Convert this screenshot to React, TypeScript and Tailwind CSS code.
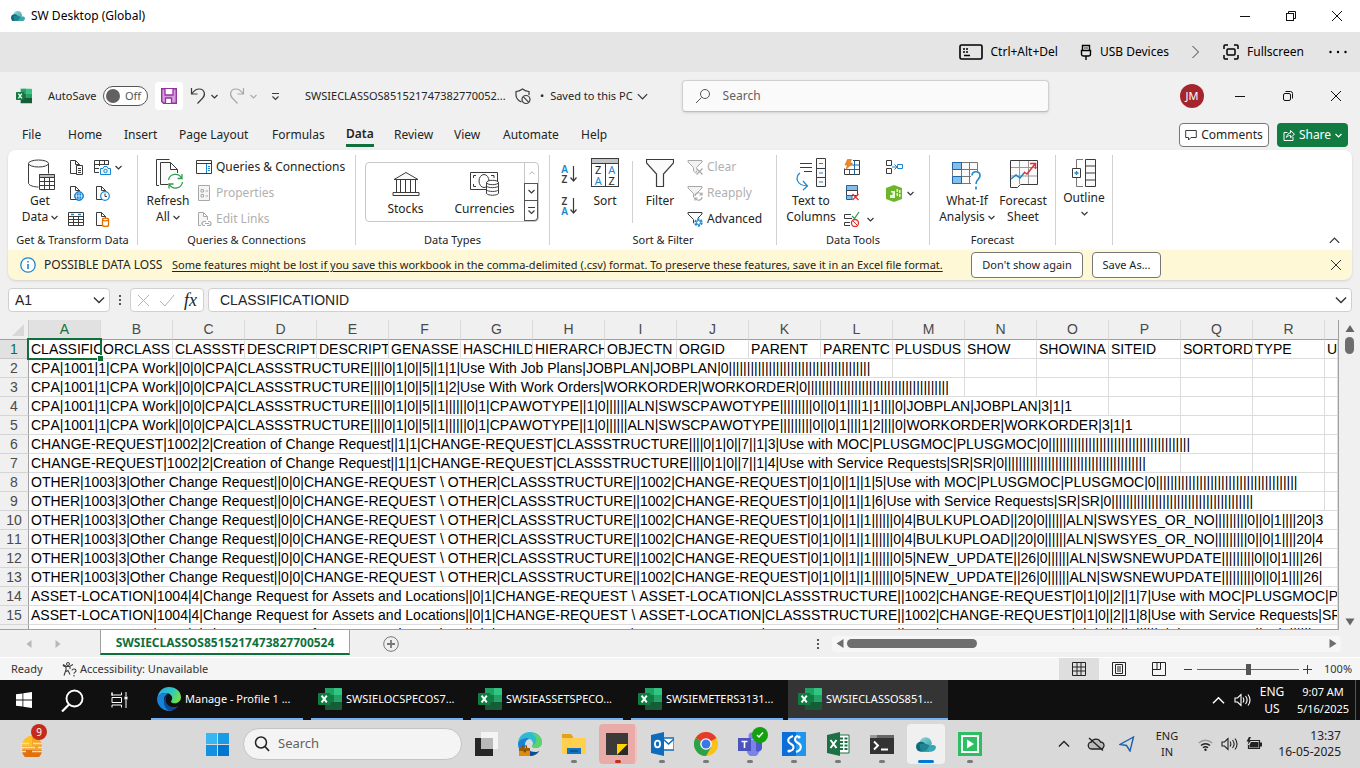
import type { ReactNode } from "react";

type P = { children?: ReactNode };

function Svg({ w, h, children, stroke = "#3b3b3b", label }: { w: number; h: number; children: ReactNode; stroke?: string; label?: string }) {
  return (
    <svg width={w} height={h} viewBox={`0 0 ${w} ${h}`} fill="none" stroke={stroke} className="shrink-0" aria-hidden={!label} aria-label={label}>
      {children}
    </svg>
  );
}

const Chevron = ({ c = "#333", up = false, w = 7 }: { c?: string; up?: boolean; w?: number }) => (
  <svg width={w} height={w} viewBox="0 0 8 8" fill="none" stroke={c} strokeWidth={w > 8 ? 0.9 : 1.3} className="shrink-0" aria-hidden>
    <path d={up ? "M.6 5.700 4 2.300l3.400 3.400" : "M.6 2.300 4 5.700l3.400-3.400"} />
  </svg>
);

const Minimize = () => <Svg w={12} h={12} stroke="#111"><path d="M1 6.500h10" /></Svg>;
const Restore = ({ round = false }: { round?: boolean }) => (
  <Svg w={12} h={12} stroke="#111">
    <rect x="1.500" y="3.500" width="7" height="7" rx={round ? 1.5 : 0} />
    <path d={round ? "M3.500 1.500h5a2 2 0 0 1 2 2v5" : "M3.500 3.500v-2h7v7h-2"} />
  </Svg>
);
const Close = ({ c = "#111" }: { c?: string }) => <Svg w={12} h={12} stroke={c}><path d="m1 1 10 10M11 1 1 11" /></Svg>;

function ExcelIcon({ s }: { s: number }) {
  return (
    <svg width={s} height={s} viewBox="0 0 24 24" className="shrink-0" aria-hidden>
      <path d="M7 1h9v7H7z" fill="#21a366" />
      <path d="M16 1h7a1 1 0 0 1 1 1v6h-8z" fill="#33c481" />
      <path d="M7 8h9v7H7z" fill="#107c41" />
      <path d="M16 8h8v7h-8z" fill="#21a366" />
      <path d="M7 15h17v7a1 1 0 0 1-1 1H8a1 1 0 0 1-1-1z" fill="#185c37" />
      <rect x="0" y="6" width="12.500" height="12" rx="1" fill="#107c41" />
      <path d="m3.600 8.600 5.200 6.800M8.800 8.600l-5.200 6.800" stroke="#fff" strokeWidth="1.900" />
    </svg>
  );
}

function CloudPc({ w }: { w: number }) {
  return (
    <svg width={w} height={(w * 3) / 4} viewBox="0 0 24 18" className="shrink-0" aria-hidden>
      <defs>
        <linearGradient id="cloudTop" x1="0" y1="0" x2="1" y2="1">
          <stop offset="0" stopColor="#8ed6d6" />
          <stop offset="1" stopColor="#35a3ae" />
        </linearGradient>
      </defs>
      <circle cx="11.500" cy="7.500" r="7.300" fill="url(#cloudTop)" />
      <circle cx="6" cy="11.700" r="6" fill="#0d6a7b" />
      <path d="M6 17.700 4 9c2-1 7-1.500 12 1v7.700z" fill="#22848f" />
      <path d="M9 17.700c4-1 5-4 7-6.500s7-2 8 .5a6 6 0 0 1-6 6z" fill="#35a8b4" />
    </svg>
  );
}

function EdgeIcon() {
  return (
    <svg width="24" height="24" viewBox="0 0 24 24" className="shrink-0" aria-hidden>
      <defs>
        <linearGradient id="edgeTop" x1="0" y1="0" x2="1" y2=".4">
          <stop offset="0" stopColor="#2aa6e8" />
          <stop offset=".6" stopColor="#2ec5c8" />
          <stop offset="1" stopColor="#6adf52" />
        </linearGradient>
      </defs>
      <path d="M0.500 11C1 4.500 6 0 12 0c7 0 12 4.700 12 10.200 0 3.600-2.800 6-6 6-2.500 0-4-.9-4-1.800 0-.8 1.200-1.200 1.200-3.200C15.200 8 12 6 8.600 6 4.500 6 1.500 8.300.5 11z" fill="url(#edgeTop)" />
      <path d="M0 12c0-3 3.500-6 8.600-6 1 0 2 .2 3 .5C8 7.500 7 10.800 7 13c0 5 4 9.500 8.500 10.400A12 12 0 0 1 0 12z" fill="#1683d8" />
      <path d="M8.700 12.500c-.3 4 3 7.600 8 7.600 2 0 3.600-.6 4.700-1.300A12 12 0 0 1 13 24C9 23 7 19 7 15c0-2.500 1-5 2.700-6-.5 1-.9 2.200-1 3.500z" fill="#0d4a94" />
    </svg>
  );
}

function TitleBar() {
  return (
    <header className="flex h-8 shrink-0 items-center bg-white pl-[11px] text-[12px] text-black">
      <CloudPc w={14} />
      <h1 className="ml-1.5 flex-1">SW Desktop (Global)</h1>
      {[<Minimize key="a" />, <Restore key="b" />, <Close key="c" />].map((icon, i) => (
        <button key={i} aria-label={["Minimize", "Restore", "Close"][i]} className="flex h-8 w-[46px] items-center justify-center">{icon}</button>
      ))}
    </header>
  );
}

function SessionBar() {
  return (
    <nav aria-label="Session" className="flex h-10 shrink-0 items-center justify-end bg-[#e5e5e5] pr-3 text-[12px] text-black">
      <button className="mr-[22px] flex items-center gap-2">
        <Svg w={24} h={16} stroke="#000">
          <rect x="1" y="1" width="22" height="14" rx="1.500" strokeWidth="1.600" />
          <path d="M4 5h2M7 5h2M4 8h2M7 8h2M5 11.500h6" strokeWidth="1.300" />
        </Svg>
        Ctrl+Alt+Del
      </button>
      <button className="mr-[22px] flex items-center gap-2">
        <Svg w={12} h={16} stroke="#000">
          <path d="M2.500 1.500h7v5h-7zM1.500 6.500h9v3.500a2 2 0 0 1-2 2h-5a2 2 0 0 1-2-2zM6 12v4M4.500 4h1M6.500 4h1" strokeWidth="1.400" />
        </Svg>
        USB Devices
      </button>
      <button aria-label="More devices" className="mr-[23px]">
        <Svg w={9} h={14}><path d="m1.500 1 6 6-6 6" /></Svg>
      </button>
      <button className="mr-6 flex items-center gap-2">
        <Svg w={16} h={16} stroke="#000">
          <path d="M1 5V2a1 1 0 0 1 1-1h3M11 1h3a1 1 0 0 1 1 1v3M15 11v3a1 1 0 0 1-1 1h-3M5 15H2a1 1 0 0 1-1-1v-3" strokeWidth="1.500" />
          <rect x="4" y="5" width="8" height="6" rx="1" strokeWidth="1.500" />
        </Svg>
        Fullscreen
      </button>
      <button aria-label="More">
        <Svg w={20} h={4} stroke="none"><g fill="#000"><circle cx="2.500" cy="2" r="1.200" /><circle cx="10" cy="2" r="1.200" /><circle cx="17.500" cy="2" r="1.200" /></g></Svg>
      </button>
    </nav>
  );
}

function ExcelTitle() {
  return (
    <div className="flex h-12 shrink-0 items-center pl-4 text-[12px] text-[#242424]">
      <ExcelIcon s={16} />
      <span className="ml-4 w-[55px] text-[11px]">AutoSave</span>
      <button role="switch" aria-checked="false" aria-label="AutoSave" className="flex h-5 w-[45px] items-center gap-[5px] rounded-full border border-[#555] bg-white pl-0.5 text-[11px] text-[#555]">
        <span className="h-3.5 w-3.5 rounded-full bg-[#616161]" />Off
      </button>
      <button aria-label="Save" className="ml-[7px] flex h-7 w-7 items-center justify-center rounded bg-white">
        <Svg w={16} h={16} stroke="#9333a0">
          <path d="M.7.700h14.600v14.600H2.500L.7 13.500z" fill="#d99be0" strokeWidth="1.400" />
          <path d="M4 1v6h8V1M4.500 15v-5h6v5" fill="#fff" strokeWidth="1.300" />
        </Svg>
      </button>
      <button aria-label="Undo" className="ml-[7px] flex w-7 items-center gap-[5px]">
        <Svg w={16} h={18}><path d="M1.500 1v6h6M1.500 7C4 3.500 6.500 1.800 9.500 2c5 .3 6.500 6 3 9.300L7.500 16.500" strokeWidth="1.200" /></Svg>
        <Chevron />
      </button>
      <button aria-label="Redo" className="ml-[11px] flex w-7 items-center gap-[5px]">
        <Svg w={16} h={18} stroke="#a8a8a8"><path d="M14.500 1v6h-6M14.500 7C12 3.500 9.500 1.800 6.500 2c-5 .3-6.500 6-3 9.300L8.500 16.500" strokeWidth="1.200" /></Svg>
        <Chevron c="#a8a8a8" />
      </button>
      <button aria-label="Customize toolbar" className="ml-[14px]">
        <Svg w={9} h={9}><path d="M1 1.500h7M1.500 4.500l3 3 3-3" strokeWidth="1.200" /></Svg>
      </button>
      <span className="ml-[25px] w-[210px] whitespace-nowrap text-[11px]">SWSIECLASSOS851521747382770052...</span>
      <Svg w={17} h={17}>
        <path d="M6.500 14C3 12.500 1 10 1 7V3.500C3.500 3.500 5.500 2.500 7.500 1c2 1.500 4 2.500 6.500 2.500V7" strokeWidth="1.200" />
        <circle cx="11" cy="11.500" r="4" strokeWidth="1.200" /><path d="m8.200 8.700 5.600 5.600" strokeWidth="1.200" />
      </Svg>
      <button className="ml-2 flex items-center gap-1 whitespace-nowrap text-[11px]"><span className="mr-0.5">•</span>Saved to this PC <Chevron w={11} /></button>
      <label className="ml-[34px] flex h-8 w-[367px] shrink items-center rounded border border-[#d0d0d0] border-b-[#bdbdbd] bg-[#fafafa] pl-3 shadow-sm">
        <Svg w={16} h={16} stroke="#555"><circle cx="10" cy="6" r="4.500" /><path d="M6.500 9.500 1 15" /></Svg>
        <input type="search" placeholder="Search" aria-label="Search" className="ml-3 w-full bg-transparent text-[12px] outline-none placeholder:text-[#616161]" />
      </label>
      <div className="ml-auto flex h-6 w-6 shrink-0 items-center justify-center rounded-full bg-[#a4262c] text-[11px] text-white">JM</div>
      <div className="ml-3 flex">
        {[<Minimize key="a" />, <Restore key="b" round />, <Close key="c" />].map((icon, i) => (
          <button key={i} aria-label={["Minimize workbook", "Restore workbook", "Close workbook"][i]} className="flex h-8 w-12 items-center justify-center">{icon}</button>
        ))}
      </div>
    </div>
  );
}

const tabs = [
  ["File", "w-[46px]"], ["Home", "w-[56px]"], ["Insert", "w-[55px]"], ["Page Layout", "w-[93px]"], ["Formulas", "w-[74px]"],
  ["Data", "w-[48px]"], ["Review", "w-[60px]"], ["View", "w-[49px]"], ["Automate", "w-[78px]"], ["Help", "w-[50px]"],
];

function RibbonTabs() {
  return (
    <div className="flex h-[30px] shrink-0 items-center pr-3 pl-[22px] text-[12px] text-[#242424]">
      {tabs.map(([t, w]) => (
        <div key={t} className={`${w} flex h-full items-start pt-0.5`}>
          <button className={t === "Data" ? "h-[25px] whitespace-nowrap border-b-[3px] border-[#0f703b] pt-[2px] font-semibold" : "h-[25px] whitespace-nowrap"}>{t}</button>
        </div>
      ))}
      <button className="ml-auto flex h-6 w-[90px] items-center justify-center gap-1 rounded border border-[#777] bg-white">
        <Svg w={12} h={12}><path d="M.7 1.500h10.600v7H6L3.500 11V8.500H.7z" /></Svg>
        Comments
      </button>
      <button className="ml-2 flex h-6 w-[71px] items-center justify-center gap-1 rounded bg-[#107c41] text-white">
        <Svg w={12} h={12} stroke="#fff"><path d="M4.500 3.500H1v8h9V8M3.500 8.500c.5-3 2-4.500 4-4.500V1.500l4 3.700-4 3.500V6.500c-1.500 0-3 .5-4 2z" /></Svg>
        Share <Chevron c="#fff" w={7} />
      </button>
    </div>
  );
}

function Group({ label, className, body, children }: P & { label?: string; className: string; body: string }) {
  return (
    <section aria-label={label} className={`${className} flex h-[90px] shrink-0 flex-col border-r border-[#d1d1d1]`}>
      <div className={`${body} flex h-[78px] items-start`}>{children}</div>
      <div className="h-3 text-center text-[11px] leading-[14px] whitespace-nowrap text-[#242424]">{label}</div>
    </section>
  );
}

function Big({ icon, lines, className, chevron }: { icon: ReactNode; lines: string[]; className: string; chevron?: boolean }) {
  return (
    <button className={`${className} flex shrink-0 flex-col items-center text-[12px] leading-4 whitespace-nowrap`}>
      <span className="flex h-[38px] items-center justify-center">{icon}</span>
      {lines.map((l, i) => (
        <span key={l} className="flex h-4 items-center gap-[3px]">{l}{chevron && i === lines.length - 1 && <Chevron />}</span>
      ))}
    </button>
  );
}

function Small({ icon, text, off, label }: { icon: ReactNode; text?: ReactNode; off?: boolean; label?: string }) {
  return (
    <button aria-label={label} disabled={off} className={`flex h-[26px] items-center gap-1 text-[12px] leading-6 whitespace-nowrap ${off ? "text-[#b0b0b0]" : "text-[#242424]"}`}>
      {icon}{text}
    </button>
  );
}

const Stack = ({ className, children }: P & { className: string }) => <div className={`${className} -mt-px flex flex-col`}>{children}</div>;

const pageShape = "M8 14.500H2.500v-13h5l4 4V8M7.500 1.500v4h4";

const DocList = () => <Svg w={16} h={16}><path d={pageShape} /><path d="M8.500 6.500h6v9h-6zM10 9.500h3M10 11.500h3M10 13.500h3" fill="#fff" /></Svg>;
const DocWeb = () => <Svg w={16} h={16}><path d={pageShape} /><circle cx="11" cy="11" r="4.500" fill="#1a86d0" stroke="#1a86d0" /><path d="M7 11h8M11 7v8M9 8c-.8 2-.8 4 0 6M13 8c.8 2 .8 4 0 6" stroke="#fff" strokeWidth=".7" /></Svg>;
const TableRange = () => <Svg w={16} h={16}><path d="M.5 1.500h15v13H.5zM.5 5.500h15M.5 8.500h15M.5 11.500h15M5.500 5v9M10.500 5v9" /><path d="M3 3.500h3M10 3.500h3" stroke="#1a86d0" strokeWidth="1.500" /></Svg>;
const TablePhoto = () => <Svg w={17} h={16}><path d="M5 13.500H.5v-12h14V6M.5 5.500h14M.5 9.500H5M5.500 1.500V7M10.500 1.500V6" /><path d="M6.500 9.500H9l1-2h3l1 2h2.500v6h-10z" fill="#e8f3fb" stroke="#1a86d0" /><circle cx="11.500" cy="12" r="1.700" stroke="#1a86d0" /></Svg>;
const DocClock = () => <Svg w={16} h={16}><path d={pageShape} /><circle cx="11" cy="11" r="4.300" fill="#fff" stroke="#1a86d0" strokeWidth="1.200" /><path d="M11 8.500V11.500h2" /></Svg>;
const DocDb = () => <Svg w={16} h={16}><path d={pageShape} /><path d="M8.500 8.500v6c1 1.300 5 1.300 6 0v-6" fill="#fff" stroke="#e07000" strokeWidth="1.300" /><ellipse cx="11.500" cy="8.500" rx="3" ry="1.300" fill="#fff" stroke="#e07000" strokeWidth="1.300" /></Svg>;

const filterSmall = "M1 1.500h14v1.500L9.500 8.500v6l-3-2.500V8.500L1 3z";

function Ribbon() {
  return (
    <div className="mx-2 flex h-[100px] shrink-0 items-start rounded-t-lg bg-white pt-[5px] text-[#242424] shadow-sm">
      <Group label="Get & Transform Data" className="w-[130px]" body="pl-[10px]">
        <Big className="w-11" lines={["Get", "Data"]} chevron icon={
          <Svg w={31} h={31}>
            <path d="M3.500 4.500v20c1 2 5 3.500 10 3.500M23.500 4.500v10" />
            <ellipse cx="13.500" cy="4.500" rx="10" ry="3.500" fill="#fafafa" />
            <path d="M14.500 15.500h15v15h-15z" fill="#fff" /><path d="M14.500 15.500h15v3h-15z" fill="#bbb" />
            <path d="M14.500 22.500h15M14.500 26.500h15M19.500 19v11M24.500 19v11" />
          </Svg>} />
        <Stack className="ml-[6px] w-[26px]"><Small label="From Text" icon={<DocList />} /><Small label="From Web" icon={<DocWeb />} /><Small label="From Table" icon={<TableRange />} /></Stack>
        <Stack className=""><Small label="From Picture" icon={<TablePhoto />} text={<Chevron />} /><Small label="Recent Sources" icon={<DocClock />} /><Small label="Existing Connections" icon={<DocDb />} /></Stack>
      </Group>
      <Group label="Queries & Connections" className="w-[218px]" body="pl-[7px]">
        <Big className="w-[46px]" lines={["Refresh", "All"]} chevron icon={
          <Svg w={31} h={32}>
            <path d="M6 27.500H3.500v-26h13" /><path d="M16 26.500H7.500v-22h10l7 7V15M17.500 4.500v7h7" fill="#fafafa" />
            <circle cx="22.500" cy="23" r="8" fill="#fff" stroke="none" />
            <path d="M15.500 22a7 7 0 0 1 13-2M29.500 24a7 7 0 0 1-13 2.500M29 16v4.500h-4.500M16 30.500V26h4.500" stroke="#2e9e4f" strokeWidth="1.300" />
          </Svg>} />
        <Stack className="ml-[5px]">
          <Small text="Queries & Connections" icon={<Svg w={16} h={16}><path d="M.5 1.500h15v13H.5zM.5 4.500h15" /><path d="M10.500 5v9M12 7.500h2M12 9.500h2M12 11.500h2" stroke="#1a86d0" /></Svg>} />
          <Small off text="Properties" icon={<Svg w={16} h={16} stroke="#a8a8a8"><path d="M2.500.500h11v15h-11z" fill="#f5f5f5" /><path d="M5 4.500h2.500v2.500H5zM5 9.500h2.500V12H5zM9.500 6H12M9.500 11H12" /></Svg>} />
          <Small off text="Edit Links" icon={<Svg w={16} h={16} stroke="#a8a8a8"><path d="M5 14.500H2.500v-13h5l4 4V9M7.500 1.500v4h4" fill="#f5f5f5" /><path d="M9 14.500H8a2 2 0 0 1 0-4h2M12 10.500h1a2 2 0 0 1 0 4h-2M9 12.500h4" strokeWidth="1.200" /></Svg>} />
        </Stack>
      </Group>
      <Group label="Data Types" className="w-[194px]" body="pt-[7px] pl-[9px]">
        <div className="flex h-[60px] w-[174px] rounded border border-[#c8c8c8] bg-white">
          <button className="flex w-[79px] flex-col items-center justify-end pb-1 text-[12px] leading-4">
            <Svg w={28} h={26}><path d="M2 8.500 14 1.500l12 7zM4.500 9v12M8.500 9v12M13.500 9v12M18.500 9v12M23.500 9v12M3 21.500h22M1 24.500h26v-3H1z" fill="#fafafa" /></Svg>
            <span className="mt-1">Stocks</span>
          </button>
          <button className="flex w-[79px] flex-col items-center justify-end pb-1 text-[12px] leading-4">
            <Svg w={31} h={26}>
              <path d="M1.500 1.500h27v17h-27z" /><path d="M4.500 7V4.500H7M22 4.500h3V7M4.500 13v2.500H7" /><ellipse cx="15" cy="10" rx="5" ry="6.500" />
              <path d="M17.500 11.500v11c1.500 2.300 10.500 2.300 12 0v-11" fill="#fff" /><ellipse cx="23.500" cy="11.500" rx="6" ry="2.200" fill="#fff" /><path d="M17.500 15c1.500 2.200 10.500 2.200 12 0M17.500 18.800c1.500 2.200 10.500 2.200 12 0" />
            </Svg>
            <span className="mt-1">Currencies</span>
          </button>
          <div className="flex flex-1 flex-col">
            <button aria-label="Scroll up" className="flex h-5 items-center justify-center border-l border-[#c8c8c8]"><Chevron c="#aaa" w={6} up /></button>
            <button aria-label="Scroll down" className="flex h-[19px] items-center justify-center border border-[#555]"><Chevron /></button>
            <button aria-label="More types" className="flex h-5 items-center justify-center rounded-br border border-t-0 border-[#555]"><Svg w={9} h={9}><path d="M1 1.500h7M1.500 4.500l3 3 3-3" strokeWidth="1.200" /></Svg></button>
          </div>
        </div>
      </Group>
      <Group label="Sort & Filter" className="w-[227px]" body="pl-[10px]">
        <div className="flex w-5 flex-col gap-3 pt-[9px]">
          {["AZ", "ZA"].map((p) => (
            <button key={p} aria-label={p === "AZ" ? "Sort A to Z" : "Sort Z to A"} className="flex h-5 items-center text-[10px] leading-[10px] font-semibold">
              <span className="flex w-[9px] flex-col items-center">
                {p.split("").map((l) => <span key={l} className={l === "A" ? "text-[#1a86d0]" : "text-[#3b3b3b]"}>{l}</span>)}
              </span>
              <Svg w={9} h={18}><path d="M4.500 1v15M1.500 12.500l3 3.500 3-3.500" strokeWidth="1.200" /></Svg>
            </button>
          ))}
        </div>
        <Big className="ml-[5px] w-10" lines={["Sort"]} icon={
          <span className="-mt-1 flex h-[29px] w-7 flex-col border border-[#3b3b3b] text-[11px] leading-[11px]">
            <span className="h-[5px] border-b border-[#3b3b3b] bg-[#c4c4c4]" />
            <span className="flex flex-1 items-center">
              <span className="flex flex-1 flex-col items-center border-r border-[#3b3b3b]"><span>Z</span><span className="text-[#1a86d0]">A</span></span>
              <span className="flex flex-1 flex-col items-center"><span className="text-[#1a86d0]">A</span><span>Z</span></span>
            </span>
          </span>} />
        <div className="mt-[6px] ml-[7px] h-[62px] w-px bg-[#d1d1d1]" />
        <Big className="ml-[5px] w-11" lines={["Filter"]} icon={
          <Svg w={28} h={32}><path d="M.5 1.500h27V5L17.500 16v12.500h-7V16L.5 5z" fill="#fafafa" strokeWidth="1.200" /></Svg>} />
        <Stack className="ml-[5px]">
          <Small off text="Clear" icon={<Svg w={16} h={16} stroke="#a8a8a8"><path d={filterSmall} fill="#f2f2f2" /><path d="m9.500 9.500 6 6m0-6-6 6" stroke="#fff" strokeWidth="3" /><path d="m9.500 9.500 6 6m0-6-6 6" strokeWidth="1.300" /></Svg>} />
          <Small off text="Reapply" icon={<Svg w={16} h={16} stroke="#a8a8a8"><path d={filterSmall} fill="#f2f2f2" /><circle cx="11.500" cy="11.500" r="4" fill="#fff" stroke="none" /><path d="M8 11a3.500 3.500 0 0 1 6.500-1.500M15 12a3.500 3.500 0 0 1-6.500 1.500M15 7.500v2.500h-2.500M8 15.500V13h2.500" strokeWidth="1.200" /></Svg>} />
          <Small text="Advanced" icon={<Svg w={16} h={16}><path d={filterSmall} /><circle cx="11.500" cy="11.500" r="4.500" fill="#fff" stroke="none" /><circle cx="11.500" cy="11.500" r="3.200" stroke="#1a86d0" strokeWidth="2" strokeDasharray="2.200 1.150" /><circle cx="11.500" cy="11.500" r="2" stroke="#1a86d0" /></Svg>} />
        </Stack>
      </Group>
      <Group label="Data Tools" className="w-[153px]" body="pl-[8px]">
        <Big className="w-[52px]" lines={["Text to", "Columns"]} icon={
          <Svg w={32} h={34}>
            <path d="M5 6.500h12M5 10.500h12M9 14.500h8" /><path d="M21.500 1.500h9v10h-9zM21.500 11.500h9v9h-9zM21.500 20.500h9v9h-9z" fill="#fafafa" />
            <path d="M24 6.500h4M24 16h4M24 25h4M5 16C0 20 1 28 12 29M8 24l4.500 5L8 33" stroke="#1a86d0" strokeWidth="1.200" />
          </Svg>} />
        <Stack className="ml-[7px] w-[42px]">
          <Small label="Flash Fill" icon={<Svg w={16} h={16}><path d="M9 1.500h6.500v14H.5v-6" /><path d="M10.500 1.500v14M5.500 10v5.500M6 6h9.500M.5 10.500h15" stroke="#1a67a8" /><path d="M3.500.500h4L6 4h2.500L2 10.500 3.500 6H1z" fill="#f08a24" stroke="#c96a10" strokeWidth=".6" /></Svg>} />
          <Small label="Remove Duplicates" icon={<Svg w={16} h={16}><path d="M2.500.500h11v5h-11z" fill="#83beec" stroke="#1a67a8" /><path d="M2.500 5.500h11v5h-11z" fill="#fff" /><path d="M2.500 10.500H8v4H2.500z" fill="#83beec" stroke="#1a67a8" /><path d="m8.500 9 6 6m0-6-6 6" stroke="#e03030" strokeWidth="1.300" /></Svg>} />
          <Small label="Data Validation" icon={<Svg w={16} h={16}><path d="M7 3.500H.5v4H8M6 11.500H.5v3H6" /><path d="m8 5 2.500 2.500L15 1" stroke="#2e9e4f" strokeWidth="1.300" /><circle cx="11" cy="12" r="3.500" stroke="#e03030" strokeWidth="1.300" /><path d="m8.500 9.500 5 5" stroke="#e03030" /></Svg>} text={<span className="ml-[3px]"><Chevron /></span>} />
        </Stack>
        <Stack className="">
          <Small label="Consolidate" icon={<Svg w={17} h={16}><path d="M.5 1.500h5v5h-5zM.5 9.500h5v5h-5z" /><path d="M6 8h5M8.500 5.500 11 8l-2.500 2.500" stroke="#1a86d0" /><path d="M11.500 5.500h5v4h-5z" stroke="#1a86d0" /></Svg>} />
          <Small label="Data Model" icon={<Svg w={16} h={17} stroke="none"><path d="M0 3 8 0l8 3v11l-8 3-8-3z" fill="#6cb52d" /><path d="M5 6h4v7H4v-3h2.500V7.500H5zM10.500 4h1.500v3h-1.500zM10.500 8h1.500v3h-1.500zM13 5h1.500v3H13zM13 9h1.500v3H13z" fill="#e8f6d8" /></Svg>} text={<span className="ml-px"><Chevron /></span>} />
        </Stack>
      </Group>
      <Group label="Forecast" className="w-[126px]" body="pl-[9px]">
        <Big className="w-[56px]" lines={["What-If", "Analysis"]} chevron icon={
          <Svg w={32} h={32} stroke="#777">
            <path d="M1.500 4.500h25v21h-25zM1.500 11.500h25M1.500 18.500h25M10.500 4.500v21M18.500 4.500v21" fill="#fafafa" />
            <path d="M1.500 4.500h9v7h-9zM1.500 18.500h9v7h-9z" fill="#83beec" stroke="#1a67a8" />
            <path d="M20 13h12v19H20z" fill="#fff" stroke="none" />
            <path d="M21 17.500c0-5 8-5 8 0 0 4-4 3.500-4 8.500M25 28.500v3" stroke="#1a86d0" strokeWidth="1.600" />
          </Svg>} />
        <Big className="w-[56px]" lines={["Forecast", "Sheet"]} icon={
          <Svg w={29} h={32}>
            <path d="M1.500 2.500h27v24h-17l-3 3h-7z" fill="#fafafa" /><path d="M2 9.500h26M2 18h26M10.500 3v23M19.500 3v23" stroke="#999" />
            <path d="m2 21 5-4 4 3 5-6" stroke="#1a86d0" strokeWidth="1.500" /><path d="m15 14 3 2 8-10M21 5.500h5.500V11" stroke="#e03030" strokeWidth="1.500" />
          </Svg>} />
      </Group>
      <section aria-label="Outline" className="flex h-[90px] w-[57px] shrink-0 justify-center border-r border-[#d1d1d1]">
        <button className="flex flex-col items-center text-[12px] leading-4">
          <span className="flex h-[35px] items-center"><Svg w={26} h={30}>
            <path d="M14.500 1.500h10v27h-10zM14.500 8h10M14.500 15h10M14.500 22h10" fill="#fafafa" />
            <path d="M12 1.500H5.500V10M5.500 20v8.500H12" stroke="#777" /><path d="M1.500 10.500h8v9h-8z" /><path d="M3.500 15h4M5.500 13v4" stroke="#1a86d0" strokeWidth="1.300" />
          </Svg></span>
          Outline
          <span className="flex h-3.5 items-center"><Chevron /></span>
        </button>
      </section>
      <button aria-label="Collapse ribbon" className="mr-3 mb-1 ml-auto self-end"><Chevron up w={11} /></button>
    </div>
  );
}

function WarningBar() {
  return (
    <div role="alert" className="mx-2 flex h-[30px] shrink-0 items-center rounded-b-lg bg-[#fff8d6] pl-3 text-[11px] whitespace-nowrap text-[#242424] shadow">
      <Svg w={16} h={16} stroke="#1a86d0"><circle cx="8" cy="8" r="7.200" fill="#fff" strokeWidth="1.300" /><path d="M8 7v5M8 4v1.500" strokeWidth="1.600" /></Svg>
      <strong className="ml-2 w-[128px] text-[12px] font-normal">POSSIBLE DATA LOSS</strong>
      <a href="#format" className="w-[787px] underline underline-offset-2">Some features might be lost if you save this workbook in the comma-delimited (.csv) format. To preserve these features, save it in an Excel file format.</a>
      <button className="ml-3 h-[26px] w-[112px] rounded border border-[#777] bg-white">Don't show again</button>
      <button className="ml-[9px] h-[26px] w-[69px] rounded border border-[#777] bg-white">Save As...</button>
      <button aria-label="Dismiss" className="mr-[10px] ml-auto"><Close c="#333" /></button>
    </div>
  );
}

function FormulaBar() {
  return (
    <div className="flex h-10 shrink-0 items-center px-2 font-['Liberation_Sans',sans-serif] text-[14px] text-[#242424]">
      <label className="flex h-6 w-[102px] items-center rounded border border-[#d0d0d0] bg-white pr-1 pl-1.5">
        <input aria-label="Name box" defaultValue="A1" className="w-0 flex-1 bg-transparent outline-none" /><Chevron w={12} />
      </label>
      <Svg w={20} h={12} stroke="none"><path d="M9 1h2v2H9zM9 5h2v2H9zM9 9h2v2H9z" fill="#555" /></Svg>
      <div className="flex h-6 w-[74px] items-center justify-between rounded border border-[#d0d0d0] bg-white px-1.5">
        <button aria-label="Cancel"><Svg w={13} h={13} stroke="#b5b5b5"><path d="m1 1 11 11M12 1 1 12" /></Svg></button>
        <button aria-label="Enter"><Svg w={16} h={13} stroke="#b5b5b5"><path d="m1 7 5 5L15 1" /></Svg></button>
        <button aria-label="Insert function" className="font-['Liberation_Serif',serif] text-[18px] leading-5 italic">fx</button>
      </div>
      <label className="ml-1 flex h-6 flex-1 items-center rounded border border-[#d0d0d0] bg-white pr-1 pl-[11px]">
        <input aria-label="Formula" defaultValue="CLASSIFICATIONID" className="w-0 flex-1 bg-transparent outline-none [font-kerning:none]" /><Chevron w={12} />
      </label>
    </div>
  );
}

const cols = "ABCDEFGHIJKLMNOPQR".split("");
const heads = ["CLASSIFIC", "ORCLASS", "CLASSSTR", "DESCRIPT", "DESCRIPT", "GENASSE", "HASCHILD", "HIERARCH", "OBJECTN", "ORGID", "PARENT", "PARENTC", "PLUSDUS", "SHOW", "SHOWINA", "SITEID", "SORTORD", "TYPE", "U"];

const pipes = "|".repeat(39);
const cpa = "CPA|1001|1|CPA Work||0|0|CPA|CLASSSTRUCTURE||||0|1|0||5||1|";
const chg = "CHANGE-REQUEST|1002|2|Creation of Change Request||1|1|CHANGE-REQUEST|CLASSSTRUCTURE||||0|1|0||7||1|";
const oth = "OTHER|1003|3|Other Change Request||0|0|CHANGE-REQUEST \\ OTHER|CLASSSTRUCTURE||1002|CHANGE-REQUEST|0|1|0||1||1|";
const ast = "ASSET-LOCATION|1004|4|Change Request for Assets and Locations||0|1|CHANGE-REQUEST \\ ASSET-LOCATION|CLASSSTRUCTURE||1002|CHANGE-REQUEST|0|1|0||2||1|";

const rows: [string, number][] = [
  [cpa + "1|Use With Job Plans|JOBPLAN|JOBPLAN|0" + pipes, 12],
  [cpa + "2|Use With Work Orders|WORKORDER|WORKORDER|0" + pipes, 13],
  [cpa + "|||||0|1|CPAWOTYPE||1|0||||||ALN|SWSCPAWOTYPE|||||||||0||0|1||||1|1||||0|JOBPLAN|JOBPLAN|3|1|1", 15],
  [cpa + "|||||0|1|CPAWOTYPE||1|0||||||ALN|SWSCPAWOTYPE|||||||||0||0|1||||1|2||||0|WORKORDER|WORKORDER|3|1|1", 16],
  [chg + "3|Use with MOC|PLUSGMOC|PLUSGMOC|0" + pipes, 17],
  [chg + "4|Use with Service Requests|SR|SR|0" + pipes, 16],
  [oth + "5|Use with MOC|PLUSGMOC|PLUSGMOC|0" + pipes, 18],
  [oth + "6|Use with Service Requests|SR|SR|0" + pipes, 18],
  [oth + "|||||0|4|BULKUPLOAD||20|0||||||ALN|SWSYES_OR_NO|||||||||0||0|1||||20|3", 19],
  [oth + "|||||0|4|BULKUPLOAD||20|0||||||ALN|SWSYES_OR_NO|||||||||0||0|1||||20|4", 19],
  [oth + "|||||0|5|NEW_UPDATE||26|0||||||ALN|SWSNEWUPDATE|||||||||0||0|1||||26|", 19],
  [oth + "|||||0|5|NEW_UPDATE||26|0||||||ALN|SWSNEWUPDATE|||||||||0||0|1||||26|", 19],
  [ast + "7|Use with MOC|PLUSGMOC|PLUSGMOC|0", 19],
  [ast + "8|Use with Service Requests|SR|SR|0", 19],
  [ast + "|||||0|4|ASSETLOC||20|0||||||ALN", 19],
];

function RowHead({ n, active }: { n: number; active?: boolean }) {
  return (
    <th scope="row" className={`h-[19px] border-r border-b p-0 text-center text-[14px] leading-[18px] font-normal ${active ? "border-r-[#0f703b] border-b-[#c8c8c8] bg-[#e1e1e1] text-[#0f703b]" : "border-r-[#a0a0a0] border-b-[#d5d5d5] bg-[#f0f0f0] text-[#4a4a4a]"}`}>{n}</th>
  );
}

function Grid() {
  return (
    <div className="flex min-h-0 flex-1">
      <div className="min-w-0 flex-1 overflow-hidden border-r border-b border-[#a0a0a0] bg-white">
        <table className="w-full table-fixed border-separate border-spacing-0 font-['Liberation_Sans',sans-serif] text-[14px] text-black [font-kerning:none]">
          <colgroup>
            <col className="w-[29px]" />
            {cols.map((c) => <col key={c} className="w-[72px]" />)}
            <col />
          </colgroup>
          <thead>
            <tr>
              <th aria-label="Select all" className="h-5 border-r border-b border-[#c8c8c8] border-b-[#a0a0a0] bg-[#f0f0f0] p-0">
                <svg width="12" height="12" viewBox="0 0 12 12" className="ml-auto mr-1" aria-hidden><path d="M12 0v12H0z" fill="#d8d8d8" /></svg>
              </th>
              {cols.map((c) => (
                <th key={c} scope="col" className={`h-5 border-r border-b border-r-[#dadada] p-0 text-[14px] leading-[19px] font-normal ${c === "A" ? "border-b-[#0f703b] bg-[#e1e1e1] text-[#0f703b]" : "border-b-[#a0a0a0] bg-[#f0f0f0] text-[#4a4a4a]"}`}>{c}</th>
              ))}
              <th className="border-b border-[#a0a0a0] bg-[#f0f0f0] p-0" />
            </tr>
          </thead>
          <tbody>
            <tr>
              <RowHead n={1} active />
              {heads.map((h, i) => (
                <td key={i} className="relative h-[19px] border-r border-b border-[#dcdcdc] p-0 leading-[18px]">
                  <div className="overflow-hidden pl-0.5 whitespace-nowrap">{h}</div>
                  {i === 0 && <>
                    <span className="absolute -top-0.5 -right-0.5 -bottom-0.5 -left-0.5 z-10 border-2 border-[#0f703b]" />
                    <span className="absolute -right-[3px] -bottom-[3px] z-10 h-[6px] w-[6px] border-t border-l border-white bg-[#0f703b]" />
                  </>}
                </td>
              ))}
            </tr>
            {rows.map(([text, span], i) => (
              <tr key={i}>
                <RowHead n={i + 2} />
                <td colSpan={span} className="h-[19px] overflow-hidden border-r border-b border-[#dcdcdc] p-0 pl-0.5 leading-[18px] whitespace-nowrap">{text}</td>
                {Array.from({ length: 19 - span }, (_, k) => <td key={k} className="border-r border-b border-[#dcdcdc] p-0" />)}
              </tr>
            ))}
          </tbody>
        </table>
      </div>
      <div className="flex w-[21px] flex-col items-center justify-between pt-[5px] pb-1">
        <div className="flex flex-col items-center gap-1">
          <Svg w={10} h={8} stroke="none"><path d="M5 0l4.500 7h-9z" fill="#666" /></Svg>
          <span className="h-[17px] w-[9px] rounded-full bg-[#6e6e6e]" />
        </div>
        <Svg w={10} h={8} stroke="none"><path d="M5 7.500.500.500h9z" fill="#666" /></Svg>
      </div>
    </div>
  );
}

function SheetTabs() {
  return (
    <div className="flex h-7 shrink-0 items-center border-b border-white">
      <button aria-label="Previous sheet" className="ml-[26px]"><Svg w={6} h={8} stroke="none"><path d="M5.500 0v8L.5 4z" fill="#b8b8b8" /></Svg></button>
      <button aria-label="Next sheet" className="ml-[23px]"><Svg w={6} h={8} stroke="none"><path d="M.5 0v8l5-4z" fill="#b8b8b8" /></Svg></button>
      <button className="mb-[2px] ml-[39px] h-[25px] w-[250px] self-end border-x border-b-2 border-[#a0a0a0] border-b-[#0f703b] bg-white pt-0.5 text-[12px] font-bold text-[#0f703b]">SWSIECLASSOS8515217473827700524</button>
      <button aria-label="New sheet" className="ml-[33px]"><Svg w={16} h={16} stroke="#777"><circle cx="8" cy="8" r="7.300" /><path d="M8 4v8M4 8h8" strokeWidth="1.800" /></Svg></button>
      <div className="ml-auto flex items-center pr-[19px]">
        <Svg w={4} h={12} stroke="none"><path d="M1 1h2v2H1zM1 5h2v2H1zM1 9h2v2H1z" fill="#555" /></Svg>
        <div className="ml-[12px] flex h-4 w-[509px] items-center rounded bg-[#f6f6f6] px-1">
          <Svg w={8} h={9} stroke="none"><path d="M7.500 0v9L.5 4.500z" fill="#6e6e6e" /></Svg>
          <span className="ml-[3px] h-[9px] w-[130px] rounded-full bg-[#6e6e6e]" />
          <span className="ml-auto"><Svg w={8} h={9} stroke="none"><path d="M.5 0v9l7-4.500z" fill="#6e6e6e" /></Svg></span>
        </div>
      </div>
    </div>
  );
}

function StatusBar() {
  return (
    <div className="flex h-[22px] shrink-0 items-center bg-[#f5f5f5] pr-2 pl-[11px] text-[11px] text-[#333]">
      <span className="w-[51px]">Ready</span>
      <Svg w={15} h={15}>
        <circle cx="6" cy="2" r="1.500" /><path d="M.8 3.500 4 5v3l-2 5.500M1 2.500l3.500 2h3l3.500-2M8 5v2M4 9.500l2-1 2 4M10 8.500c0-2 4-2 4 .2 0 1.500-2 1.300-2 3M12 13v1.500" strokeWidth="1.100" />
      </Svg>
      <span className="ml-[3px]">Accessibility: Unavailable</span>
      <div className="ml-auto flex h-full items-center">
        <button aria-label="Normal view" className="flex h-full w-10 items-center justify-center bg-[#dedede]"><Svg w={14} h={14} stroke="#222"><path d="M.5.500h13v13H.5zM5 .5v13M9 .5v13M.5 5h13M.5 9h13" /></Svg></button>
        <button aria-label="Page layout view" className="flex h-full w-10 items-center justify-center"><Svg w={14} h={14} stroke="#222"><path d="M.5.500h13v13H.5zM3.500 2.500h7v9h-7zM5 5h4M5 7h4M5 9h4" /></Svg></button>
        <button aria-label="Page break view" className="flex h-full w-10 items-center justify-center"><Svg w={14} h={14} stroke="#222"><path d="M.5.500h13v13H.5zM.5 7.500h8v-7M5 .5v7" /></Svg></button>
        <button aria-label="Zoom out" className="ml-[5px]"><Svg w={9} h={9}><path d="M0 4.500h8" /></Svg></button>
        <label className="relative mx-1 flex h-4 w-[102px] items-center">
          <input type="range" aria-label="Zoom" min={10} max={190} defaultValue={101} className="h-px w-full appearance-none bg-[#666] [&::-webkit-slider-thumb]:h-[11px] [&::-webkit-slider-thumb]:w-[5px] [&::-webkit-slider-thumb]:appearance-none [&::-webkit-slider-thumb]:bg-[#555]" />
        </label>
        <button aria-label="Zoom in"><Svg w={9} h={9}><path d="M0 4.500h9M4.500 0v9" /></Svg></button>
        <span className="ml-[12px] w-7 text-right">100%</span>
      </div>
    </div>
  );
}

const Speaker = ({ c }: { c: string }) => (
  <Svg w={17} h={14} stroke={c}><path d="M1 5h2.500L7 1.500v11L3.500 9H1zM9 4.500c1 1.500 1 3.500 0 5M11.500 3c2 2.500 2 5.500 0 8M14 1.500c2.600 3.500 2.600 7.500 0 11" strokeWidth="1.100" /></Svg>
);

const tasks = ["Manage - Profile 1 ...", "SWSIELOCSPECOS7...", "SWSIEASSETSPECO...", "SWSIEMETERS3131...", "SWSIECLASSOS851..."];

function RemoteTaskbar() {
  return (
    <div className="flex h-10 shrink-0 items-center bg-[#101010] text-[12px] whitespace-nowrap text-white">
      <button aria-label="Start" className="ml-4"><Svg w={16} h={16} stroke="none"><path d="M0 2.300 6.500 1.400v6.100H0zM7.300 1.300 16 0v7.500H7.300zM0 8.400h6.500v6.200L0 13.700zM7.300 8.400H16V16l-8.700-1.200z" fill="#fff" /></Svg></button>
      <button aria-label="Search" className="ml-[29px]"><Svg w={23} h={23} stroke="#fff"><circle cx="13.500" cy="9.500" r="8" strokeWidth="1.900" /><path d="m8 15.500-7 7" strokeWidth="2.200" /></Svg></button>
      <button aria-label="Task view" className="ml-[27px]"><Svg w={17} h={16} stroke="#fff"><path d="M1 4V.5M1 .5v2.500h9.500V.5M1 5.500h9.500v5H1zM1 15.500V13h9.500v2.500M15 0v4M15 8v8" /><path d="M13.500 4.500h3v3h-3z" fill="#fff" stroke="none" /></Svg></button>
      <div className="ml-[23px] flex h-full">
        {tasks.map((t, i) => (
          <div key={t} className={i === 4 ? "h-full w-40" : "h-full w-[160px] pr-2"}>
            <button className={`flex h-full w-full items-center gap-1 overflow-hidden border-b-2 border-[#76b0f5] text-[11px] ${i === 4 ? "ml-[-3px] bg-[#343434] pl-[10px]" : i === 0 ? "pl-1.5" : "pl-[7px]"}`}>
              {i === 0 ? <EdgeIcon /> : <ExcelIcon s={24} />}{t}
            </button>
          </div>
        ))}
      </div>
      <div className="ml-auto flex items-center pr-1 text-center leading-[17px]">
        <button aria-label="Show hidden icons"><Chevron c="#fff" up w={13} /></button>
        <span className="ml-[9px]"><Speaker c="#fff" /></span>
        <span className="ml-[7px] w-[28px]">ENG<br />US</span>
        <time className="ml-[10px] w-[54px] text-[11px]">9:07 AM<br />5/16/2025</time>
        <span className="ml-[5px] h-10 w-px bg-[#555]" />
      </div>
    </div>
  );
}

function App24({ children }: P) {
  return <svg width="24" height="24" viewBox="0 0 24 24" className="shrink-0" fill="none" aria-hidden>{children}</svg>;
}

const dock: { name: string; icon: ReactNode; mark: string }[] = [
  { name: "Task view", mark: "", icon: <App24><path d="M1 6h18v18H1z" fill="#262626" /><path d="M7 0h17v17H7z" fill="#f4f4f4" /><path d="M7 6h12v11H7z" fill="#b9b9b9" /></App24> },
  { name: "Edge", mark: "", icon: <App24>
    <path d="M0 12C0 4 6 0 12 0s12 4 12 10c0 4-3 6-6 6s-4-1-4-2 1-1 1-3-3-5-7-5-7 3-8 6z" fill="#2cbcd2" /><path d="M14 1c6 1 10 4.500 10 9 0 4-3 6-6 6s-4-1-4-2 6-2 4-8z" fill="#5fd36a" />
    <path d="M0 12c0-3 4-6 8-6 1 0 3 .3 4 1-4 0-5 4-5 6 0 6 4 10 9 10-8 3-16-3-16-11z" fill="#1683d8" /><path d="M8 12c0 5 4 8 9 8 2 0 3-.4 4.500-1.200C19 22.500 16 24 12 24z" fill="#0d4a94" />
    <path d="M1 16h11v8H1z" fill="#e08a10" /><path d="M1 16h11v3H1z" fill="#9a5c08" /><path d="M4.500 16v-2h4v2M6 18.500h1.500v1.500H6z" stroke="#7a4a00" /></App24> },
  { name: "File Explorer", mark: "g", icon: <App24><path d="M0 2h9l2 3v5H0z" fill="#e3a21a" /><path d="M0 6h24v16H0z" fill="#ffd04d" /><path d="M5 16h14v6H5z" fill="#1273c5" /><path d="M8 19h8" stroke="#0d4f8a" strokeWidth="1.500" /></App24> },
  { name: "Sticky Notes", mark: "r", icon: <App24><path d="M1 1h22v22H1z" fill="#3c3a39" /><path d="M12 12h11l-11 11z" fill="#ffd500" /><path d="M23 12v11H12z" fill="#2a2827" /></App24> },
  { name: "Outlook", mark: "g", icon: <App24><path d="M12 6h12v12H12z" fill="#fff" stroke="#0f6cbd" strokeWidth="1.300" /><path d="m13 7 5.500 5L24 7" stroke="#0f6cbd" strokeWidth="1.500" /><path d="M1 3 14 0v24L1 21z" fill="#0f6cbd" /><ellipse cx="7.500" cy="12" rx="2.600" ry="3.300" stroke="#fff" strokeWidth="1.800" /></App24> },
  { name: "Chrome", mark: "g", icon: <App24><circle cx="12" cy="12" r="12" fill="#fbc116" /><path d="M12 12 1.600 6A12 12 0 0 1 22.400 6z" fill="#e33b2e" /><path d="M12 12 1.600 6A12 12 0 0 0 12 24l5.200-9z" fill="#2ca14c" /><path d="M1.600 6h20.800H12z" fill="#e33b2e" /><circle cx="12" cy="12" r="5.800" fill="#fff" /><circle cx="12" cy="12" r="4.500" fill="#3b78e7" /></App24> },
  { name: "Teams", mark: "g", icon: <App24><circle cx="14" cy="4" r="3.500" fill="#7b83eb" /><path d="M8 8h13v9a6 6 0 0 1-12 3z" fill="#7b83eb" /><path d="M18 9h6v6a4 4 0 0 1-6 4z" fill="#5059c9" /><path d="M0 6h13v13H0z" fill="#4b53bc" /><path d="M3.500 9.500h6M6.500 9.500V16" stroke="#fff" strokeWidth="1.600" /></App24> },
  { name: "Sync", mark: "g", icon: <App24><path d="M0 0h24v24H0z" fill="#0a6fd8" /><path d="M14 0h10v24H14z" fill="#1e96f0" /><path d="M11 4C5 6 5 10 9 12s3 6-1 7M16 4c-4 1-4 5 0 7s4 7-2 9" stroke="#fff" strokeWidth="2" /><circle cx="17" cy="5" r="1.600" fill="#fff" /><circle cx="7" cy="19" r="1.600" fill="#fff" /></App24> },
  { name: "Excel", mark: "g", icon: <App24><path d="M12 3h11v18H12z" fill="#fff" stroke="#1d7044" /><path d="M14 6.500h3M18.500 6.500h3M14 10h3M18.500 10h3M14 13.500h3M18.500 13.500h3M14 17h3M18.500 17h3" stroke="#1d7044" strokeWidth="2" /><path d="M1 3 14 0v24L1 21z" fill="#1d7044" /><path d="m4.500 8 6 8M10.500 8l-6 8" stroke="#fff" strokeWidth="2" /></App24> },
  { name: "Terminal", mark: "g", icon: <App24><path d="M0 3h24v19H0z" fill="#333" /><path d="M0 3h7v3H0z" fill="#999" /><path d="M7 3h17v3H7z" fill="#666" /><path d="m4 9.500 4 4-4 4M11 17.500h7" stroke="#fff" strokeWidth="1.900" /></App24> },
  { name: "Cloud PC", mark: "b", icon: <CloudPc w={20} /> },
  { name: "Media Player", mark: "g", icon: <App24><path d="M0 0h24v24H0z" fill="#2dbd62" /><path d="M4 4h16v16H4z" stroke="#fff" strokeWidth="1.800" /><path d="M9 7.500v9l7-4.500z" fill="#fff" /></App24> },
];

function HostTaskbar() {
  return (
    <footer className="flex h-12 shrink-0 items-center bg-[#d9d9d9] text-[11px] text-[#222]">
      <button aria-label="Weather" className="relative ml-5 h-9 w-[186px]">
        <svg width="24" height="24" viewBox="0 0 24 24" className="mt-px" aria-hidden>
          <circle cx="12" cy="13" r="10" fill="#f5a524" /><path d="M2 13a10 10 0 0 1 10-10v10z" fill="#ffc21a" /><path d="M2 17h20a10 10 0 0 1-20 0z" fill="#e2700c" />
          <path d="M0 10.500h9M13 10.500h9M0 14.500h15M18 14.500h4M0 18.500h6M12 18.500h10" stroke="#f3dfc0" strokeWidth="1.300" />
        </svg>
        <span className="absolute -top-0.5 left-[11px] flex h-4 w-4 items-center justify-center rounded-full bg-[#c42b1c] text-[10px] text-white">9</span>
      </button>
      <button aria-label="Start menu"><svg width="24" height="24" viewBox="0 0 24 24" aria-hidden>
        <path d="M0 1h11v11H0z" fill="#38b6f2" /><path d="M12 1h11v11H12z" fill="#189be4" /><path d="M0 13h11v11H0z" fill="#1291e0" /><path d="M12 13h11v11H12z" fill="#0276cf" />
      </svg></button>
      <label className="ml-[13px] flex h-8 w-[219px] shrink items-center rounded-full border border-[#c4c4c4] bg-[#f4f4f4] pl-2.5">
        <Svg w={16} h={16} stroke="#222"><circle cx="7" cy="6.500" r="5.500" strokeWidth="1.500" /><path d="m11 10.500 4 4.500" strokeWidth="1.700" /></Svg>
        <input type="search" placeholder="Search" aria-label="Search Windows" className="ml-2 w-full bg-transparent text-[13px] outline-none placeholder:text-[#616161]" />
      </label>
      <div className="ml-0.5 flex h-full items-center">
        {dock.map((d) => (
          <button key={d.name} aria-label={d.name} className="relative flex h-full w-11 items-center justify-center">
            <span className={`flex h-10 w-[38px] items-center justify-center rounded ${d.mark === "r" ? "border-r-2 border-[#f0c4c0] bg-[#e9aba8]" : d.mark === "b" ? "bg-[#f0f0f0]" : ""}`}>{d.icon}</span>
            {d.mark && <span className={`absolute bottom-[5px] h-[3px] rounded-full ${d.mark === "g" ? "w-[6px] bg-[#7a7a7a]" : d.mark === "r" ? "w-[6px] bg-[#c42b1c]" : "w-4 bg-[#0078d4]"}`} />}
            {d.name === "Teams" && <span className="absolute top-[7px] right-1 flex h-4 w-4 items-center justify-center rounded-full bg-[#13a10e]"><Svg w={8} h={8} stroke="#fff"><path d="m1 4 2 2 4-4.500" strokeWidth="1.500" /></Svg></span>}
          </button>
        ))}
      </div>
      <div className="ml-auto flex items-center pr-[19px] text-center leading-4">
        <button aria-label="Hidden icons"><Chevron up w={12} c="#222" /></button>
        <span className="ml-[17px]"><Svg w={18} h={14} stroke="#222"><path d="M5 12a3.500 3.500 0 0 1-.5-7A5 5 0 0 1 13.500 5a3.500 3.500 0 0 1 0 7z" fill="#bbb" strokeWidth="1.300" /><path d="m2 1 14 12.500" strokeWidth="1.400" /></Svg></span>
        <span className="ml-[14px]"><Svg w={16} h={16} stroke="#1f5fae"><path d="M14.500 1 1 8.500l6.500 1L11 15z" strokeWidth="1.400" /></Svg></span>
        <span className="ml-[18px] w-7">ENG<br />IN</span>
        <span className="ml-[17px]"><Svg w={15} h={13} stroke="#222"><path d="M.8 5a9.500 9.500 0 0 1 13.400 0" stroke="#999" strokeWidth="1.300" /><path d="M3 7.500a6.500 6.500 0 0 1 9 0M5 9.800a3.700 3.700 0 0 1 5 0" strokeWidth="1.400" /><circle cx="7.500" cy="11.700" r="1.200" fill="#222" stroke="none" /></Svg></span>
        <span className="ml-2"><Speaker c="#222" /></span>
        <span className="ml-2"><Svg w={17} h={14} stroke="#222"><path d="M4 3.500h9.500v8h-11V8" strokeWidth="1.200" /><path d="M5 5h7.500v5.500H3.500V8z" fill="#222" stroke="none" /><path d="M15 5.500v4" strokeWidth="2" /><path d="M3 0 .5 4.500h2L1.500 8l4-5H3.500L5 0z" fill="#222" stroke="none" /></Svg></span>
        <time className="w-[78px] text-right text-[12px]">13:37<br />16-05-2025</time>
      </div>
    </footer>
  );
}

export default function App() {
  return (
    <div className="flex h-screen w-full flex-col overflow-hidden bg-[#f0f0f0] font-['Noto_Sans',sans-serif]">
      <TitleBar />
      <SessionBar />
      <ExcelTitle />
      <RibbonTabs />
      <Ribbon />
      <WarningBar />
      <FormulaBar />
      <Grid />
      <SheetTabs />
      <StatusBar />
      <RemoteTaskbar />
      <HostTaskbar />
    </div>
  );
}
